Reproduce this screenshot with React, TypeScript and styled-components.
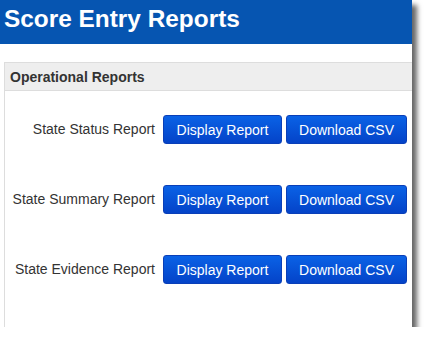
import React from "react";
import styled, { createGlobalStyle } from "styled-components";

const GlobalStyle = createGlobalStyle`
  html, body {
    margin: 0;
    padding: 0;
    background: #ffffff;
  }
  body {
    font-family: "Liberation Sans", Arial, sans-serif;
  }
`;

const Frame = styled.div`
  width: 412px;
  height: 327px;
  overflow: hidden;
  background: #ffffff;
  box-shadow: 5px 5px 5px rgba(0, 0, 0, 0.6);
  display: flex;
  flex-direction: column;
`;

const Header = styled.div`
  background: #0655b1;
  height: 44px;
  flex-shrink: 0;
  padding: 0 4px;
  display: flex;
  align-items: center;
`;

const Title = styled.h1`
  margin: 0;
  color: #ffffff;
  font-size: 24.4px;
  font-weight: bold;
  line-height: 1;
  margin-top: -6px;
`;

const Panel = styled.div`
  margin: 18px 0 0 4px;
  width: 420px;
  height: 300px;
  flex-shrink: 0;
  border: 1px solid #dddddd;
  display: flex;
  flex-direction: column;
`;

const PanelHeading = styled.div`
  background: #eeeeee;
  border-bottom: 1px solid #dddddd;
  height: 27px;
  padding: 0 5px;
  display: flex;
  align-items: center;
  font-size: 14px;
  font-weight: bold;
  color: #333333;
`;

const PanelBody = styled.div`
  padding-top: 24px;
  display: flex;
  flex-direction: column;
  gap: 41px;
`;

const Row = styled.div`
  display: flex;
  align-items: center;
  height: 29px;
`;

const Label = styled.div`
  width: 150px;
  text-align: right;
  font-size: 14px;
  color: #333333;
  margin-right: 8px;
  margin-top: -1px;
`;

const Button = styled.button<{ $width: number }>`
  width: ${p => p.$width}px;
  height: 29px;
  margin-right: 4px;
  padding: 0;
  border: 1px solid #0a3fb8;
  border-radius: 3px;
  background: linear-gradient(#0a62e6, #0443c8);
  color: #ffffff;
  font-family: "Liberation Sans", Arial, sans-serif;
  font-size: 14px;
  cursor: pointer;
`;

const reports = ["State Status Report", "State Summary Report", "State Evidence Report"];

export default function App() {
  return (
    <Frame>
      <GlobalStyle />
      <Header>
        <Title>Score Entry Reports</Title>
      </Header>
      <Panel>
        <PanelHeading>Operational Reports</PanelHeading>
        <PanelBody>
          {reports.map(r => (
            <Row key={r}>
              <Label>{r}</Label>
              <Button $width={119}>Display Report</Button>
              <Button $width={121}>Download CSV</Button>
            </Row>
          ))}
        </PanelBody>
      </Panel>
    </Frame>
  );
}
